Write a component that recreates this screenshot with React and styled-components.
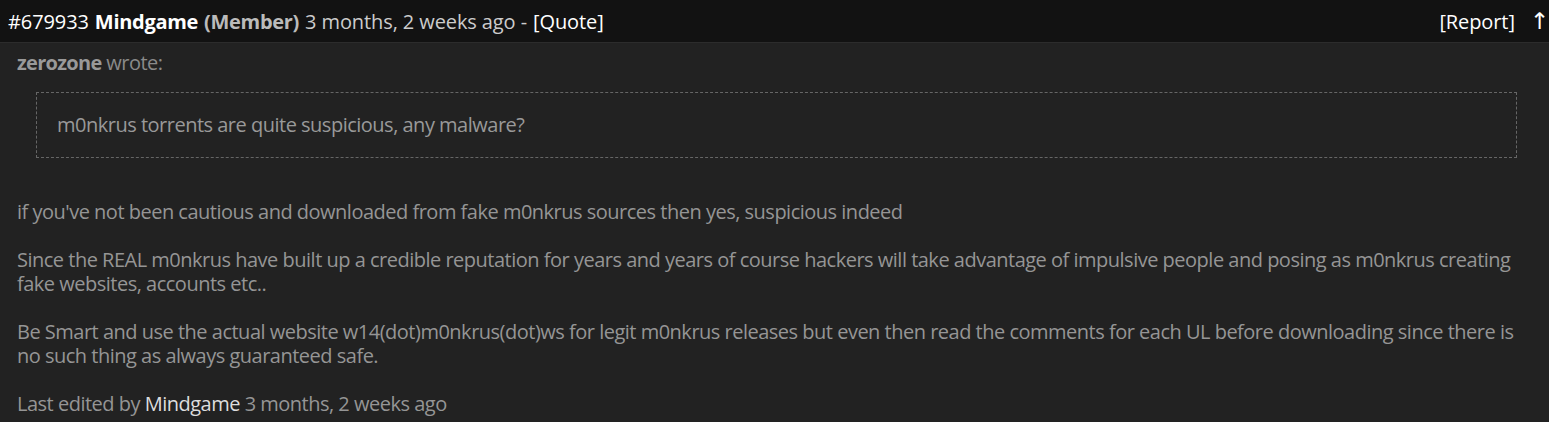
import React from 'react';
import styled, { createGlobalStyle } from 'styled-components';

const GlobalStyle = createGlobalStyle`
    html, body {
        margin: 0;
        padding: 0;
        background: #222222;
    }
    body {
        font-family: "Open Sans", "Noto Sans", sans-serif;
        font-size: 20px;
        letter-spacing: -0.5px;
    }
`;

const Post = styled.div`
    width: 100%;
    background: #222222;
    color: #959595;
`;

const PostHeader = styled.div`
    display: flex;
    align-items: center;
    justify-content: space-between;
    height: 42px;
    padding: 0 0 0 8px;
    background: #121212;
    border-bottom: 1px solid #2c2c2c;
    color: #cccccc;
    letter-spacing: -0.1px;
`;

const HeaderSide = styled.div`
    display: flex;
    align-items: center;
    gap: 6px;
`;

const PostId = styled.span`
    color: #ffffff;
`;

const Author = styled.strong`
    color: ${props => props.muted ? '#bbbbbb' : '#ffffff'};
    font-weight: 700;
    letter-spacing: -0.3px;
`;

const HeaderLink = styled.a`
    color: #ffffff;
    text-decoration: none;
    cursor: pointer;
`;

const Arrow = styled.span`
    color: #ffffff;
    margin-left: 9px;
    font-family: "DejaVu Sans", sans-serif;
    font-size: 23px;
    line-height: 1;
`;

const PostBody = styled.div`
    padding: 8px 17px 8px 17px;
    line-height: 24px;
`;

const Cite = styled.div`
    color: #8a8a8a;
    b {
        color: #999999;
        letter-spacing: -0.7px;
    }
`;

const Quote = styled.blockquote`
    margin: 17px 15px 0 19px;
    padding: 20px 20px;
    border: 1px dashed #666666;
    color: #999999;
`;

const Paragraph = styled.p`
    margin: ${props => props.first ? '42px' : '24px'} 0 0 0;
`;

const Editor = styled.span`
    color: #dddddd;
`;

export default function App() {
    return (
        <Post>
            <GlobalStyle />
            <PostHeader>
                <HeaderSide>
                    <PostId>#679933</PostId>
                    <Author>Mindgame</Author>
                    <Author muted>(Member)</Author>
                    <span>3 months, 2 weeks ago -</span>
                    <HeaderLink>[Quote]</HeaderLink>
                </HeaderSide>
                <HeaderSide>
                    <HeaderLink>[Report]</HeaderLink>
                    <Arrow>↑</Arrow>
                </HeaderSide>
            </PostHeader>
            <PostBody>
                <Cite><b>zerozone</b> wrote:</Cite>
                <Quote>m0nkrus torrents are quite suspicious, any malware?</Quote>
                <Paragraph first>if you've not been cautious and downloaded from fake m0nkrus sources then yes, suspicious indeed</Paragraph>
                <Paragraph>Since the REAL m0nkrus have built up a credible reputation for years and years of course hackers will take advantage of impulsive people and posing as m0nkrus creating fake websites, accounts etc..</Paragraph>
                <Paragraph>Be Smart and use the actual website w14(dot)m0nkrus(dot)ws for legit m0nkrus releases but even then read the comments for each UL before downloading since there is no such thing as always guaranteed safe.</Paragraph>
                <Paragraph>Last edited by <Editor>Mindgame</Editor> 3 months, 2 weeks ago</Paragraph>
            </PostBody>
        </Post>
    );
}
